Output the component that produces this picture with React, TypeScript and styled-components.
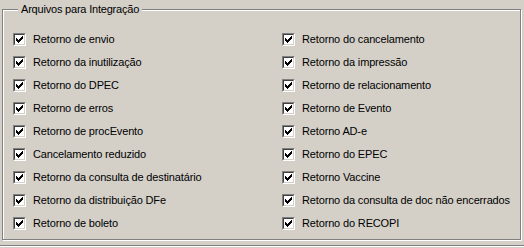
import styled, { createGlobalStyle } from "styled-components";

const GlobalStyle = createGlobalStyle`
  html, body {
    margin: 0;
    padding: 0;
    background: #d4d0c8;
  }
  body {
    font-family: "Liberation Sans", Arial, sans-serif;
    font-size: 11px;
    color: #000;
  }
`;

const Page = styled.div`
  width: 524px;
  height: 248px;
  box-sizing: border-box;
  padding: 3px 3px 0 2px;
  display: flex;
  flex-direction: column;
`;

const Group = styled.fieldset`
  margin: 0;
  padding: 12px 0 4px 10px;
  width: 519px;
  box-sizing: border-box;
  border: 1px solid #808080;
  box-shadow: inset 1px 1px 0 #fff, 1px 1px 0 #fff;
  min-inline-size: 0;
`;

const Legend = styled.legend`
  margin-left: 5px;
  padding: 0 3px;
  line-height: 13px;
  letter-spacing: -0.2px;
  background: #d4d0c8;
`;

const Grid = styled.div`
  display: grid;
  grid-template-columns: 269px 1fr;
  grid-auto-flow: column;
  grid-template-rows: repeat(9, 23px);
`;

const Item = styled.label`
  display: flex;
  align-items: center;
  gap: 7px;
  white-space: nowrap;
  letter-spacing: -0.15px;
  line-height: 13px;
`;

const Box = styled.span`
  flex: none;
  width: 13px;
  height: 13px;
  box-sizing: border-box;
  border-top: 1px solid #808080;
  border-left: 1px solid #808080;
  border-right: 1px solid #fff;
  border-bottom: 1px solid #fff;
  display: flex;
`;

const BoxInner = styled.span`
  flex: 1;
  box-sizing: border-box;
  border-top: 1px solid #404040;
  border-left: 1px solid #404040;
  border-right: 1px solid #d4d0c8;
  border-bottom: 1px solid #d4d0c8;
  background: #fff;
  display: flex;
`;

const Footer = styled.div`
  margin-top: 5px;
  margin-left: -2px;
  margin-right: -3px;
  height: 0;
  border-top: 1px solid #808080;
  border-bottom: 1px solid #fff;
`;

const checkCols: [number, number][] = [
  [1, 2],
  [2, 3],
  [3, 4],
  [4, 3],
  [5, 2],
  [6, 1],
  [7, 0],
];

function Check() {
  return (
    <Box>
      <BoxInner>
        <svg width="9" height="9" viewBox="0 0 9 9" shapeRendering="crispEdges">
          {checkCols.map(([x, y]) => (
            <rect key={x} x={x} y={y + 1} width="1" height="3" fill="#000" />
          ))}
        </svg>
      </BoxInner>
    </Box>
  );
}

const items = [
  "Retorno de envio",
  "Retorno da inutilização",
  "Retorno do DPEC",
  "Retorno de erros",
  "Retorno de procEvento",
  "Cancelamento reduzido",
  "Retorno da consulta de destinatário",
  "Retorno da distribuição DFe",
  "Retorno de boleto",
  "Retorno do cancelamento",
  "Retorno da impressão",
  "Retorno de relacionamento",
  "Retorno de Evento",
  "Retorno AD-e",
  "Retorno do EPEC",
  "Retorno Vaccine",
  "Retorno da consulta de doc não encerrados",
  "Retorno do RECOPI",
];

export default function App() {
  return (
    <>
      <GlobalStyle />
      <Page>
        <Group>
          <Legend>Arquivos para Integração</Legend>
          <Grid>
            {items.map((text) => (
              <Item key={text}>
                <Check />
                {text}
              </Item>
            ))}
          </Grid>
        </Group>
        <Footer />
      </Page>
    </>
  );
}
